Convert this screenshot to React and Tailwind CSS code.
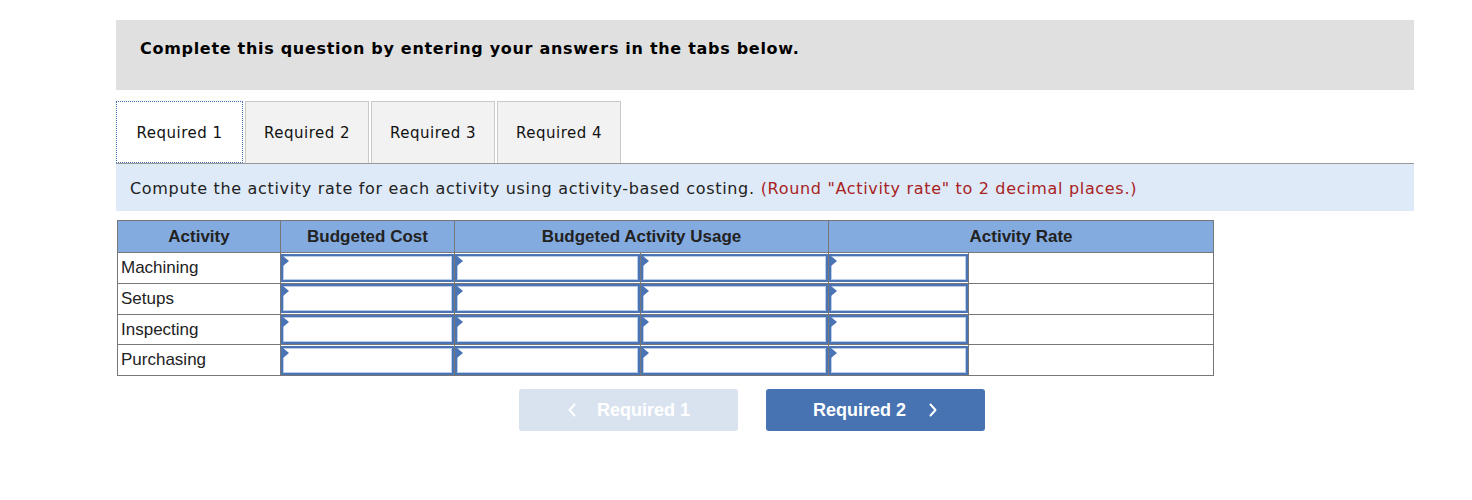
import React from "react";

const rows = ["Machining", "Setups", "Inspecting", "Purchasing"];

// input cell with the small blue marker in the corner
function InputCell() {
  return (
    <td className="border border-[#777] p-0 h-[30.75px]">
      <div className="relative h-[28.75px] border-2 border-[#4b74b5] shadow-[inset_0_0_0_1px_#b8cdea] bg-white">
        <span className="absolute left-0 top-0 w-0 h-0 border-y-[5px] border-y-transparent border-l-[6px] border-l-[#4b74b5]" />
      </div>
    </td>
  );
}

function Chevron({ dir }) {
  return (
    <svg width="10" height="16" viewBox="0 0 10 16" fill="none" stroke="currentColor" strokeWidth="2" strokeLinecap="round" strokeLinejoin="round">
      {dir === "left" ? <path d="M7.5 2.5 2.5 8l5 5.5" /> : <path d="M2.5 2.5 7.5 8l-5 5.5" />}
    </svg>
  );
}

export default function App() {
  return (
    <div className="bg-white min-h-[500px] pt-5 pl-[116px] pr-[58px]">
      {/* instructions */}
      <div className="h-[70px] bg-[#e0e0e0] flex items-center pb-3 px-6 font-['DejaVu_Sans',Verdana,sans-serif] text-[16px] tracking-[0.7px] font-bold text-black">
        Complete this question by entering your answers in the tabs below.
      </div>

      {/* tabs */}
      <div className="mt-[11px] flex items-end border-b border-[#999] font-['DejaVu_Sans',Verdana,sans-serif] text-[15px] tracking-[0.5px] text-[#111]">
        <div className="w-[127px] h-[62px] pt-[2px] bg-white outline-1 outline-dotted outline-[#3e6fb5] -outline-offset-1 flex items-center justify-center">
          Required 1
        </div>
        {["Required 2", "Required 3", "Required 4"].map((t) => (
          <div
            key={t}
            className="ml-[2px] w-[124px] h-[62px] pt-[2px] bg-[#f2f2f2] border border-b-0 border-[#c9c9c9] flex items-center justify-center"
          >
            {t}
          </div>
        ))}
      </div>

      <div className="h-[47px] bg-[#deeaf7] flex items-center pt-[2px] px-[14px] font-['DejaVu_Sans',Verdana,sans-serif] text-[16px] tracking-[0.68px] text-[#222]">
        Compute the activity rate for each activity using activity-based costing.
        <span className="ml-[6px] text-[#a8221f]">(Round "Activity rate" to 2 decimal places.)</span>
      </div>

      {/* table */}
      <table className="mt-[9px] ml-px border-collapse font-['Liberation_Sans',Arial,sans-serif] text-[17px] text-[#222] table-fixed w-[1096px]">
        <colgroup>
          <col className="w-[163px]" />
          <col className="w-[174px]" />
          <col className="w-[186px]" />
          <col className="w-[188px]" />
          <col className="w-[140px]" />
          <col className="w-[245px]" />
        </colgroup>
        <thead>
          <tr className="bg-[#84abdf] h-[32px]">
            <th className="border border-[#777] font-bold">Activity</th>
            <th className="border border-[#777] font-bold">Budgeted Cost</th>
            <th colSpan={2} className="border border-[#777] font-bold">Budgeted Activity Usage</th>
            <th colSpan={2} className="border border-[#777] font-bold">Activity Rate</th>
          </tr>
        </thead>
        <tbody>
          {rows.map((r) => (
            <tr key={r}>
              <td className="border border-[#777] px-[3px] text-left">{r}</td>
              <InputCell />
              <InputCell />
              <InputCell />
              <InputCell />
              <td className="border border-[#777]" />
            </tr>
          ))}
        </tbody>
      </table>

      {/* nav buttons */}
      <div className="mt-[13px] flex justify-center gap-[28px] pr-[26px] font-['Liberation_Sans',Arial,sans-serif] text-[18px] font-bold text-white">
        <button className="w-[219px] h-[42px] rounded-[3px] bg-[#d9e3ef] flex items-center justify-center gap-[20px]">
          <Chevron dir="left" />
          <span>Required 1</span>
        </button>
        <button className="w-[219px] h-[42px] rounded-[3px] bg-[#4773b2] flex items-center justify-center gap-[22px]">
          <span>Required 2</span>
          <Chevron dir="right" />
        </button>
      </div>
    </div>
  );
}
